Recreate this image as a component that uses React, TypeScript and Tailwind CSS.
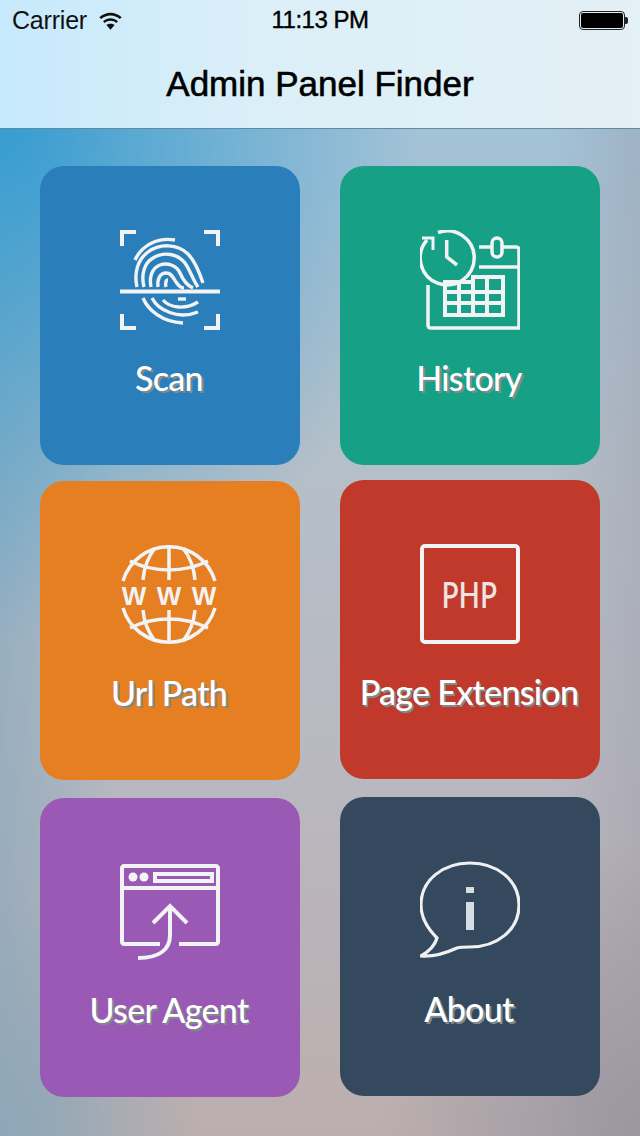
const labelFont =
  "font-['Lato',sans-serif] font-medium text-white text-[34px] leading-none tracking-[-0.7px] [text-shadow:2px_2px_0_#7f8c8d]";

function ScanIcon() {
  return (
    <svg width="100" height="100" viewBox="0 0 100 100" fill="none" stroke="#f1f3f4" strokeWidth="4">
      <path d="M2 16V2h14M84 2h14v14M2 84v14h14M84 98h14V84" />
      <path d="M0 61.5h100" />
      <g strokeWidth="3.4">
        <path d="M15 30C22 15 38 7 55 10" />
        <path d="M17 57C14 44 17 30 28 22C40 13 58 14 68 24C76 32 80 44 83 53" />
        <path d="M24 57C21 45 24 33 33 28C44 21 58 24 65 33C70 40 73 50 78 57" />
        <path d="M31 57C29 47 32 38 40 35C48 32 57 36 60 43C63 50 68 56 73 58" />
        <path d="M38 57C37 49 40 43 46 43C52 43 53 48 56 52C58 55 60 58 64 58" />
        <path d="M46 57C45 53 46 50 48 50" />
        <path d="M23 68C28 80 42 92 63 93" />
        <path d="M32 68C38 80 58 90 78 82" />
        <path d="M43 70C50 78 65 80 78 72" />
        <path d="M58 69H66" />
      </g>
    </svg>
  );
}

function HistoryIcon() {
  return (
    <svg width="100" height="100" viewBox="0 0 100 100" fill="none" stroke="#f1f3f4" strokeWidth="3.5">
      <path d="M18 2.5A27 27 0 1 1 7 10" />
      <path d="M2 8H13V20" strokeWidth="3" />
      <path d="M26.7 10V27L37 35" />
      <path d="M59 17H72M82 17H96C98 17 99 18 99 20V98H11C9 98 8 97 8 95V55" />
      <path d="M59 37H99" />
      <rect x="72" y="8" width="10" height="19" rx="5" />
      <path d="M25 85V52H53V47H83V85ZM25 62H83M25 73H83M39 52V85M53 47V85M67 47V85" strokeWidth="4" />
    </svg>
  );
}

function GlobeIcon() {
  return (
    <svg width="100" height="100" viewBox="0 0 100 100" fill="none" stroke="#f1f3f4" strokeWidth="3.5">
      <path d="M3 36A48 48 0 0 1 95 36" />
      <path d="M3 63A48 48 0 0 0 95 63" />
      <path d="M49 1V35M49 65V97" />
      <path d="M10 16C22 22 36 25 49 25C62 25 76 22 88 16" />
      <path d="M10 83C22 77 36 74 49 74C62 74 76 77 88 83" />
      <path d="M35 3C28 12 24 22 23 35M63 3C70 12 74 22 75 35" />
      <path d="M35 96C28 87 24 77 23 65M63 96C70 87 74 77 75 65" />
      <g fill="#f1f3f4" stroke="none" fontSize="26" fontWeight="700" fontFamily="'Liberation Sans', sans-serif" textAnchor="middle">
        <text x="14" y="60">W</text>
        <text x="49" y="60">W</text>
        <text x="84" y="60">W</text>
      </g>
    </svg>
  );
}

function PhpIcon() {
  return (
    <div className="w-[100px] h-[100px] border-4 border-[#f1f3f4] rounded-[5px] flex items-center justify-center">
      <span className="font-['Lato',sans-serif] font-semibold text-[36px] leading-none text-[#f0e4e2] tracking-[0.5px] scale-x-[0.76]">PHP</span>
    </div>
  );
}

function AgentIcon() {
  return (
    <svg width="100" height="100" viewBox="0 0 100 100" fill="none" stroke="#f1f3f4" strokeWidth="4">
      <path d="M40 82H4C3 82 2 81 2 80V6C2 5 3 4 4 4H96C97 4 98 5 98 6V80C98 81 97 82 96 82H59" />
      <path d="M2 26H98" />
      <circle cx="13" cy="15" r="4.5" fill="#f1f3f4" stroke="none" />
      <circle cx="24" cy="15" r="4.5" fill="#f1f3f4" stroke="none" />
      <rect x="35" y="12" width="57" height="7" />
      <path d="M33 61L50 44L67 61" />
      <path d="M50 44V73C50 87 40 96 18 96" />
    </svg>
  );
}

function AboutIcon() {
  return (
    <svg width="100" height="100" viewBox="0 0 100 100" fill="none" stroke="#eef0f2" strokeWidth="3.2">
      <path d="M17 77C7 67 1 57 1 44C1 19 23 2 50 2C77 2 99 19 99 44C99 69 77 86 50 86C45 86 41 86 37 87C26 92 12 96 1 95C8 91 15 84 17 77Z" />
      <rect x="46" y="26" width="8" height="6" fill="#d6dce2" stroke="none" />
      <rect x="46" y="41" width="8" height="28" fill="#d6dce2" stroke="none" />
    </svg>
  );
}

function Tile({ bg, label, icon }: { bg: string; label: string; icon: React.ReactNode }) {
  return (
    <div className={`h-[299px] rounded-[24px] flex flex-col items-center pt-[64px] ${bg}`}>
      {icon}
      <div className={`${labelFont} mt-[31px] -ml-[2px] whitespace-nowrap`}>{label}</div>
    </div>
  );
}

export default function App() {
  return (
    <div className="w-[640px] h-[1136px] overflow-hidden flex flex-col bg-[radial-gradient(ellipse_420px_520px_at_0%_11%,#379dd1_0,rgba(55,157,209,0)_100%),radial-gradient(ellipse_200px_240px_at_0%_100%,#8ea7b8_0,rgba(142,167,184,0)_100%),radial-gradient(ellipse_260px_300px_at_100%_100%,#9a97a1_0,rgba(154,151,161,0)_100%),linear-gradient(90deg,rgba(125,165,190,0.55)_0,rgba(125,165,190,0)_120px),linear-gradient(270deg,rgba(150,150,165,0.35)_0,rgba(150,150,165,0)_90px),linear-gradient(180deg,#a3c4d8_0%,#a4c2d6_14%,#b5bfc8_42%,#b9b8c0_68%,#bcaeae_100%)]">
      {/* Nav bar */}
      <header className="h-[129px] shrink-0 border-b border-[#5f8aa3] bg-[linear-gradient(90deg,#c6e9fc_0%,#dbeff8_40%,#e3f0f5_100%)] font-['Liberation_Sans',sans-serif] text-black">
        <div className="h-10 px-3 flex items-center relative">
          <span className="text-[25px] leading-none text-[#111] tracking-[-0.2px]">Carrier</span>
          <svg className="ml-[9px]" width="29" height="21" viewBox="0 0 28 20" fill="#111">
            <path d="M14 19L10 14.4C12.3 12.6 15.7 12.6 18 14.4Z" />
            <path d="M8.3 12.4C11.5 9.4 16.5 9.4 19.7 12.4L21.2 10.7C17 6.9 11 6.9 6.8 10.7Z" />
            <path d="M5 8.6C10 4 18 4 23 8.6L24.8 6.8C18.6 1 9.4 1 3.2 6.8Z" />
          </svg>
          <span className="absolute left-0 right-0 text-center text-[24px] leading-none tracking-[-0.5px] [-webkit-text-stroke:0.4px_#000]">11:13 PM</span>
          <div className="ml-auto flex items-center">
            <div className="w-[46px] h-[19px] rounded-[4px] border border-[#222] p-[1px]">
              <div className="w-full h-full rounded-[2px] bg-black" />
            </div>
            <div className="w-[3px] h-[7px] rounded-r-[2px] bg-[#222]" />
          </div>
        </div>
        <h1 className="mt-[5px] text-center text-[35px] leading-[78px] h-[78px] font-normal [-webkit-text-stroke:0.6px_#000]">Admin Panel Finder</h1>
      </header>

      {/* Menu tiles */}
      <main className="px-10 pt-[37px] grid grid-cols-2 gap-x-10">
        <div className="flex flex-col gap-[16px]">
          <Tile bg="bg-[#2a7fba]" label="Scan" icon={<ScanIcon />} />
          <Tile bg="bg-[#e67e22]" label="Url Path" icon={<GlobeIcon />} />
          <div className="mt-[2px]">
            <Tile bg="bg-[#9b59b6]" label="User Agent" icon={<AgentIcon />} />
          </div>
        </div>
        <div className="flex flex-col gap-[16px]">
          <Tile bg="bg-[#16a085]" label="History" icon={<HistoryIcon />} />
          <div className="-mt-px">
            <Tile bg="bg-[#c0392b]" label="Page Extension" icon={<PhpIcon />} />
          </div>
          <div className="mt-[2px]">
            <Tile bg="bg-[#34495e]" label="About" icon={<AboutIcon />} />
          </div>
        </div>
      </main>
    </div>
  );
}
